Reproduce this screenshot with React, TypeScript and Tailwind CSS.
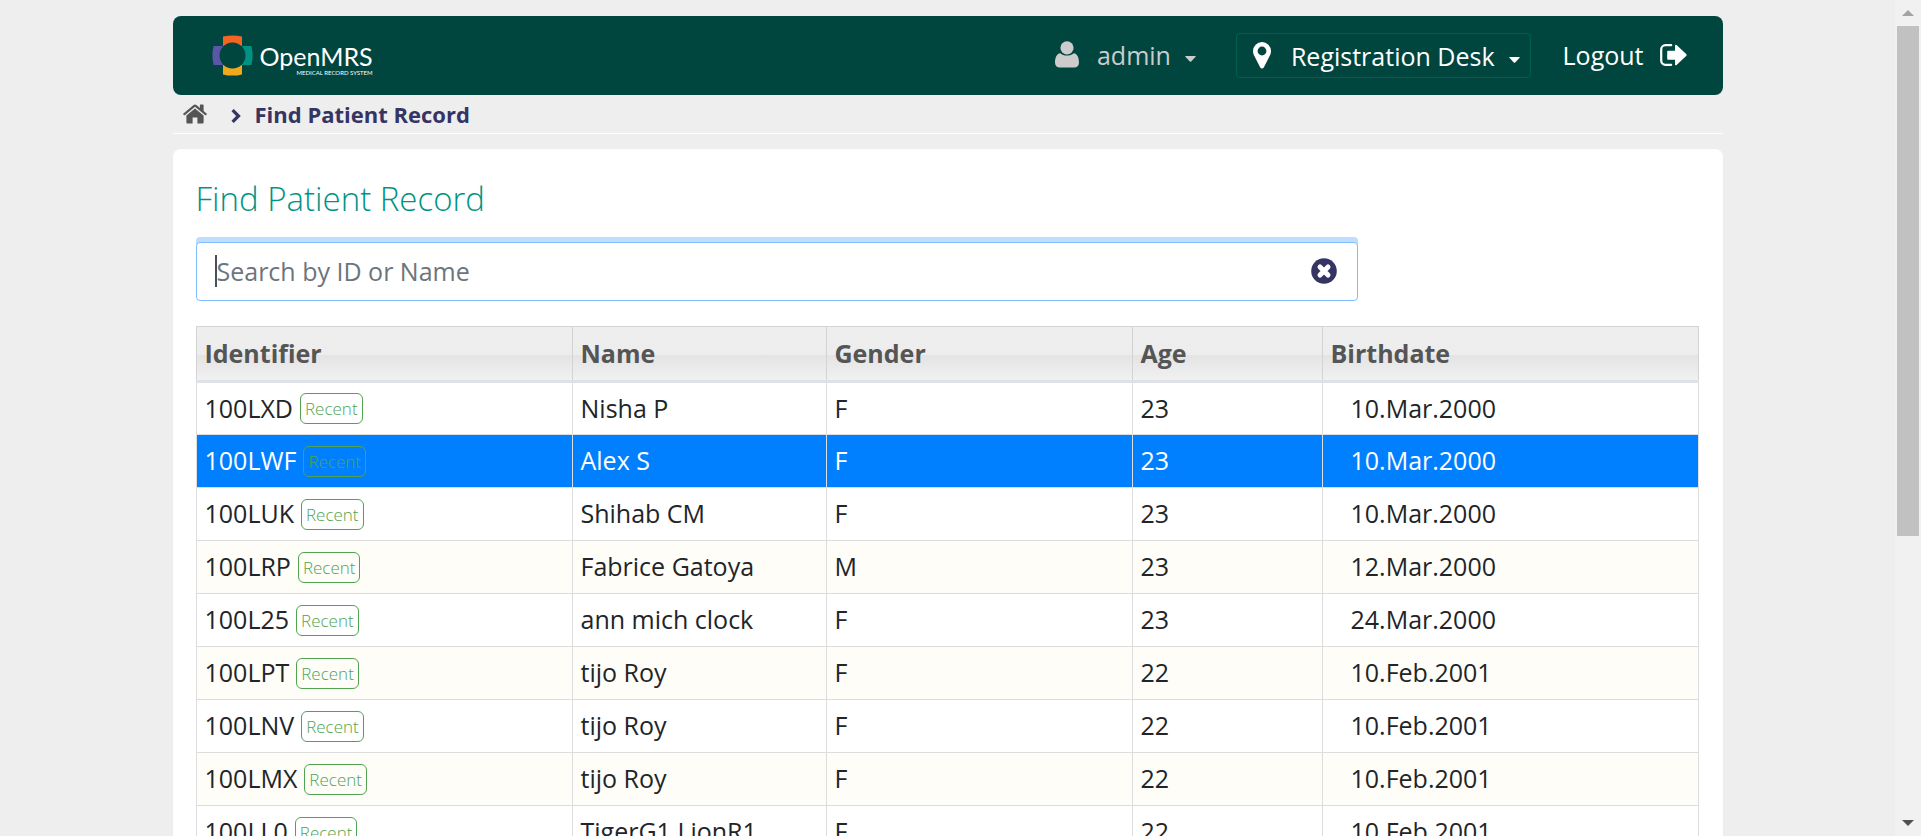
import { useState } from "react";

type Patient = {
  id: string;
  name: string;
  gender: string;
  age: number;
  birthdate: string;
};

const patients: Patient[] = [
  { id: "100LXD", name: "Nisha P", gender: "F", age: 23, birthdate: "10.Mar.2000" },
  { id: "100LWF", name: "Alex S", gender: "F", age: 23, birthdate: "10.Mar.2000" },
  { id: "100LUK", name: "Shihab CM", gender: "F", age: 23, birthdate: "10.Mar.2000" },
  { id: "100LRP", name: "Fabrice Gatoya", gender: "M", age: 23, birthdate: "12.Mar.2000" },
  { id: "100L25", name: "ann mich clock", gender: "F", age: 23, birthdate: "24.Mar.2000" },
  { id: "100LPT", name: "tijo Roy", gender: "F", age: 22, birthdate: "10.Feb.2001" },
  { id: "100LNV", name: "tijo Roy", gender: "F", age: 22, birthdate: "10.Feb.2001" },
  { id: "100LMX", name: "tijo Roy", gender: "F", age: 22, birthdate: "10.Feb.2001" },
  { id: "100LL0", name: "TigerG1 LionR1", gender: "F", age: 22, birthdate: "10.Feb.2001" },
];

const columns = [
  { label: "Identifier", width: "w-[376px]" },
  { label: "Name", width: "w-[254px]" },
  { label: "Gender", width: "w-[306px]" },
  { label: "Age", width: "w-[190px]" },
  { label: "Birthdate", width: "w-auto" },
];

function Logo() {
  return (
    <a href="#home" className="flex items-center gap-[7px] font-['Lato',sans-serif] text-white">
      <svg viewBox="0 0 41 41" className="size-[41px]" aria-hidden="true">
        <path d="M11 1.6Q20.5-.8 30 1.6V11H11Z" fill="#f26522" />
        <path d="M11 39.4Q20.5 41.8 30 39.4V30H11Z" fill="#f0a81c" />
        <path d="M1.6 11Q-.8 20.5 1.6 30H11V11Z" fill="#5b57a6" />
        <path d="M39.4 11Q41.8 20.5 39.4 30H30V11Z" fill="#009384" />
        <circle cx="20.5" cy="20.5" r="13" fill="#00463f" />
      </svg>
      <span className="flex flex-col items-end pt-1.5">
        <span className="text-[25px] leading-7">OpenMRS</span>
        <span className="text-[6px] leading-[6px]">MEDICAL RECORD SYSTEM</span>
      </span>
    </a>
  );
}

function UserIcon() {
  return (
    <svg viewBox="0 0 24 27" className="h-[27px] w-6" fill="currentColor" aria-hidden="true">
      <circle cx="12" cy="6.8" r="6.6" />
      <path d="M5.2 12.2C1.6 12.6 0 17 0 21.4 0 24.8 2 26.6 4.8 26.6H19.2C22 26.6 24 24.8 24 21.4 24 17 22.4 12.6 18.8 12.2 17 13.8 14.8 14.6 12 14.6S7 13.8 5.2 12.2Z" />
    </svg>
  );
}

function PinIcon() {
  return (
    <svg viewBox="0 0 18 27" className="h-[27px] w-[18px]" fill="currentColor" aria-hidden="true">
      <path
        fillRule="evenodd"
        d="M9 0A9 9 0 0 0 0 9C0 10.3.2 11.4.6 12.4L7.1 25.2Q7.7 26.4 9 26.4T10.9 25.2L17.4 12.4C17.8 11.4 18 10.3 18 9A9 9 0 0 0 9 0ZM9 4.6A4.4 4.4 0 1 1 9 13.4 4.4 4.4 0 0 1 9 4.6Z"
      />
    </svg>
  );
}

function LogoutIcon() {
  return (
    <svg viewBox="0 0 27 22" className="h-[22px] w-[27px]" aria-hidden="true">
      <path
        d="M11.2 1.2H5.4A4.2 4.2 0 0 0 1.2 5.4V16.6A4.2 4.2 0 0 0 5.4 20.8H11.2"
        fill="none"
        stroke="currentColor"
        strokeWidth="2.2"
        strokeLinecap="round"
      />
      <path
        d="M7.2 7.6Q7.2 6.8 8 6.8H15V1.6Q15.2.2 16.6.9L26.4 10.2Q27 11 26.4 11.8L16.6 21.1Q15.2 21.8 15 20.4V15.8H8Q7.2 15.8 7.2 15Z"
        fill="currentColor"
      />
    </svg>
  );
}

function HomeIcon() {
  return (
    <svg viewBox="0 0 24 20" className="h-5 w-6" fill="#555" aria-hidden="true">
      <path d="M12 4.4 20.6 11.5V18.6Q20.6 19.5 19.7 19.5H14.4V13.4H9.6V19.5H4.3Q3.4 19.5 3.4 18.6V11.5Z" />
      <path d="M23.8 9.7 20.6 7V1.2Q20.6.6 20 .6H17.5Q16.9.6 16.9 1.2V3.9L13.4 1Q12 0 10.6 1L.2 9.7Q0 10 .2 10.3L1 11.2Q1.3 11.5 1.7 11.2L12 2.7 22.3 11.2Q22.7 11.5 23 11.2L23.8 10.3Q24 10 23.8 9.7Z" />
    </svg>
  );
}

function ChevronIcon() {
  return (
    <svg viewBox="0 0 10 14" className="h-3.5 w-2.5" aria-hidden="true">
      <path d="M1.6 1.1 7.5 7 1.6 12.9" fill="none" stroke="#363463" strokeWidth="3.2" />
    </svg>
  );
}

function Caret() {
  return (
    <svg viewBox="0 0 11 6" className="h-1.5 w-[11px]" fill="currentColor" aria-hidden="true">
      <path d="M.6 0H10.4Q11 .3 10.6.8L6.2 5.4Q5.5 6 4.8 5.4L.4.8Q0 .3.6 0Z" />
    </svg>
  );
}

function ClearIcon() {
  return (
    <svg viewBox="0 0 26 26" className="size-[26px]" aria-hidden="true">
      <circle cx="13" cy="13" r="12.8" fill="#363463" />
      <path d="M9 9 17 17M17 9 9 17" stroke="#fff" strokeWidth="5" strokeLinecap="round" />
    </svg>
  );
}

function Header() {
  return (
    <header className="flex h-[79px] items-center justify-between rounded-lg bg-[#00463f] pr-9 pl-[39px] text-white">
      <Logo />
      <nav className="flex items-center">
        <button type="button" className="mr-10 flex items-center pb-0.5 text-[#ccc]">
          <UserIcon />
          <span className="ml-[18px]">admin</span>
          <span className="mt-2 ml-[14px]">
            <Caret />
          </span>
        </button>
        <button
          type="button"
          className="mr-8 flex h-[45px] items-center rounded border border-[#005f50] pr-2.5 pl-4"
        >
          <PinIcon />
          <span className="ml-5">Registration Desk</span>
          <span className="mt-2 ml-[14px]">
            <Caret />
          </span>
        </button>
        <a href="#logout" className="flex items-center gap-4 pb-0.5">
          Logout
          <LogoutIcon />
        </a>
      </nav>
    </header>
  );
}

function Breadcrumbs() {
  return (
    <nav
      aria-label="Breadcrumb"
      className="flex h-[39px] items-center border-b border-white pl-2.5 text-[22px] font-bold text-[#363463]"
    >
      <a href="#home" aria-label="Home">
        <HomeIcon />
      </a>
      <span className="mt-1 ml-6">
        <ChevronIcon />
      </span>
      <span className="ml-[14px]">Find Patient Record</span>
    </nav>
  );
}

function PatientTable() {
  const [selected, setSelected] = useState("100LWF");
  return (
    <table className="mt-[25px] w-full table-fixed border-collapse text-left text-[#212529]">
      <thead>
        <tr className="h-[55px] bg-[linear-gradient(#eee_0%,#ededed_50%,#e3e3e3_50%,#f2f2f2_100%)] text-[#555]">
          {columns.map((column) => (
            <th
              key={column.label}
              className={`${column.width} border border-b-[3px] border-[#d3d3d3] border-b-[#dee2e6] px-2 pb-0.5 font-bold`}
            >
              {column.label}
            </th>
          ))}
        </tr>
      </thead>
      <tbody>
        {patients.map((patient, index) => {
          const active = patient.id === selected;
          const tone = active
            ? "bg-[#007fff] text-white"
            : index % 2 === 1
              ? "bg-[#fffdf7]"
              : "bg-white";
          return (
            <tr key={patient.id} className={`h-[53px] ${tone}`} onClick={() => setSelected(patient.id)}>
              <td className="border border-[#ddd] px-2 pb-0.5">
                <span className="flex items-center gap-[7px]">
                  {patient.id}
                  <span className="mt-0.5 rounded-md border border-[#51a351] px-1 text-[17px] leading-[29px] font-light text-[#51a351]">
                    Recent
                  </span>
                </span>
              </td>
              <td className="border border-[#ddd] px-2 pb-0.5">{patient.name}</td>
              <td className="border border-[#ddd] px-2 pb-0.5">{patient.gender}</td>
              <td className="border border-[#ddd] px-2 pb-0.5">{patient.age}</td>
              <td className="border border-[#ddd] pr-2 pb-0.5 pl-7">{patient.birthdate}</td>
            </tr>
          );
        })}
      </tbody>
    </table>
  );
}

function ScrollBar() {
  return (
    <div aria-hidden="true" className="flex w-[26px] shrink-0 flex-col items-center justify-between bg-[#f1f1f1] px-0.5">
      <div className="flex h-[26px] items-center">
        <svg viewBox="0 0 12 6" className="h-1.5 w-3" fill="#a3a3a3">
          <path d="M6 0 12 6H0Z" />
        </svg>
      </div>
      <div className="w-full flex-1">
        <div className="h-[65%] w-[22px] bg-[#c1c1c1]" />
      </div>
      <div className="flex h-[26px] items-center">
        <svg viewBox="0 0 12 6" className="h-1.5 w-3" fill="#505050">
          <path d="M6 6 12 0H0Z" />
        </svg>
      </div>
    </div>
  );
}

export default function App() {
  const [query, setQuery] = useState("");
  return (
    <div className="flex h-screen bg-[#eee] font-['Open_Sans','Noto_Sans',sans-serif] text-[25px] leading-9 font-normal">
      <div className="min-w-0 flex-1 overflow-hidden">
        <div className="mx-auto max-w-[1550px] pt-4">
          <Header />
          <Breadcrumbs />
          <main className="mt-[15px] rounded-lg bg-white pt-[30px] pr-6 pb-6 pl-[23px]">
            <h1 className="text-[33px] leading-10 font-light text-[#009384]">Find Patient Record</h1>
            <form
              className="mt-[23px] flex h-[59px] w-[1162px] max-w-full items-center rounded border border-[#80bdff] bg-white pr-5 pb-0.5 pl-[18px] shadow-[0_-5px_0_0_#bfdeff]"
              onSubmit={(event) => event.preventDefault()}
            >
              <span className="h-8 w-0.5 bg-[#495057]" aria-hidden="true" />
              <input
                type="text"
                aria-label="Search by ID or Name"
                placeholder="Search by ID or Name"
                value={query}
                onChange={(event) => setQuery(event.target.value)}
                className="min-w-0 flex-1 bg-transparent text-[#495057] outline-none placeholder:text-[#6c757d]"
              />
              <button type="button" aria-label="Clear search" onClick={() => setQuery("")}>
                <ClearIcon />
              </button>
            </form>
            <PatientTable />
          </main>
        </div>
      </div>
      <ScrollBar />
    </div>
  );
}
